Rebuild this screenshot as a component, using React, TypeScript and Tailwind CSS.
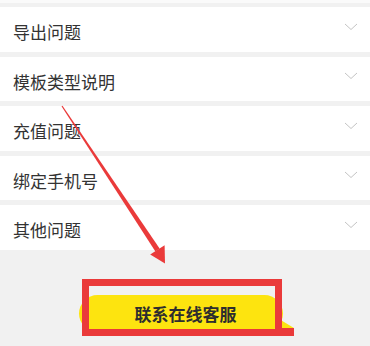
import React from "react";

const items = ["导出问题", "模板类型说明", "充值问题", "绑定手机号", "其他问题"];

function Chevron() {
  return (
    <svg width="14" height="8" viewBox="0 0 14 8" className="mb-[5px]">
      <polyline points="1,1 7,6.5 13,1" fill="none" stroke="#c4c4c4" strokeWidth="1" />
    </svg>
  );
}

export default function App() {
  return (
    <div
      className="relative w-[370px] h-[346px] overflow-hidden bg-[#f1f1f1] flex flex-col"
      style={{ fontFamily: '"Noto Sans CJK SC", "Noto Sans", sans-serif' }}
    >
      <div className="h-[3px] bg-[#fafafa]" />
      <div className="mt-[4px] flex flex-col gap-[5px]">
        {items.map((t) => (
          <div key={t} className="h-[44.5px] bg-white flex items-center justify-between pl-[13px] pr-[12px]">
            <span className="text-[17px] leading-none text-[#333333] pt-[5px]">{t}</span>
            <Chevron />
          </div>
        ))}
      </div>
      <div className="mt-[45.5px] ml-[79px] w-[204px] h-[37px] rounded-full bg-[#fde40f] flex items-center justify-center pl-[9px]">
        <span className="text-[17px] leading-none font-bold text-[#2e2e2e]">联系在线客服</span>
      </div>

      <svg className="absolute left-0 top-0" width="370" height="346" viewBox="0 0 370 346">
        <polygon points="61.5,106.3 62.5,105.7 159.6,248.6 155.4,251.4" fill="#ea3a3a" />
        <polygon points="150.2,254.6 165,263.5 164.6,245.2" fill="#ea3a3a" />
        <polygon points="276,317 284,322 294,328 294,331 276,331" fill="#fde40f" />
        <rect x="282" y="328" width="12" height="8" fill="#ea3a3a" />
      </svg>
      <div className="absolute left-[82px] top-[279px] w-[200px] h-[57px] border-[7px] border-[#ea3a3a]" />
    </div>
  );
}
